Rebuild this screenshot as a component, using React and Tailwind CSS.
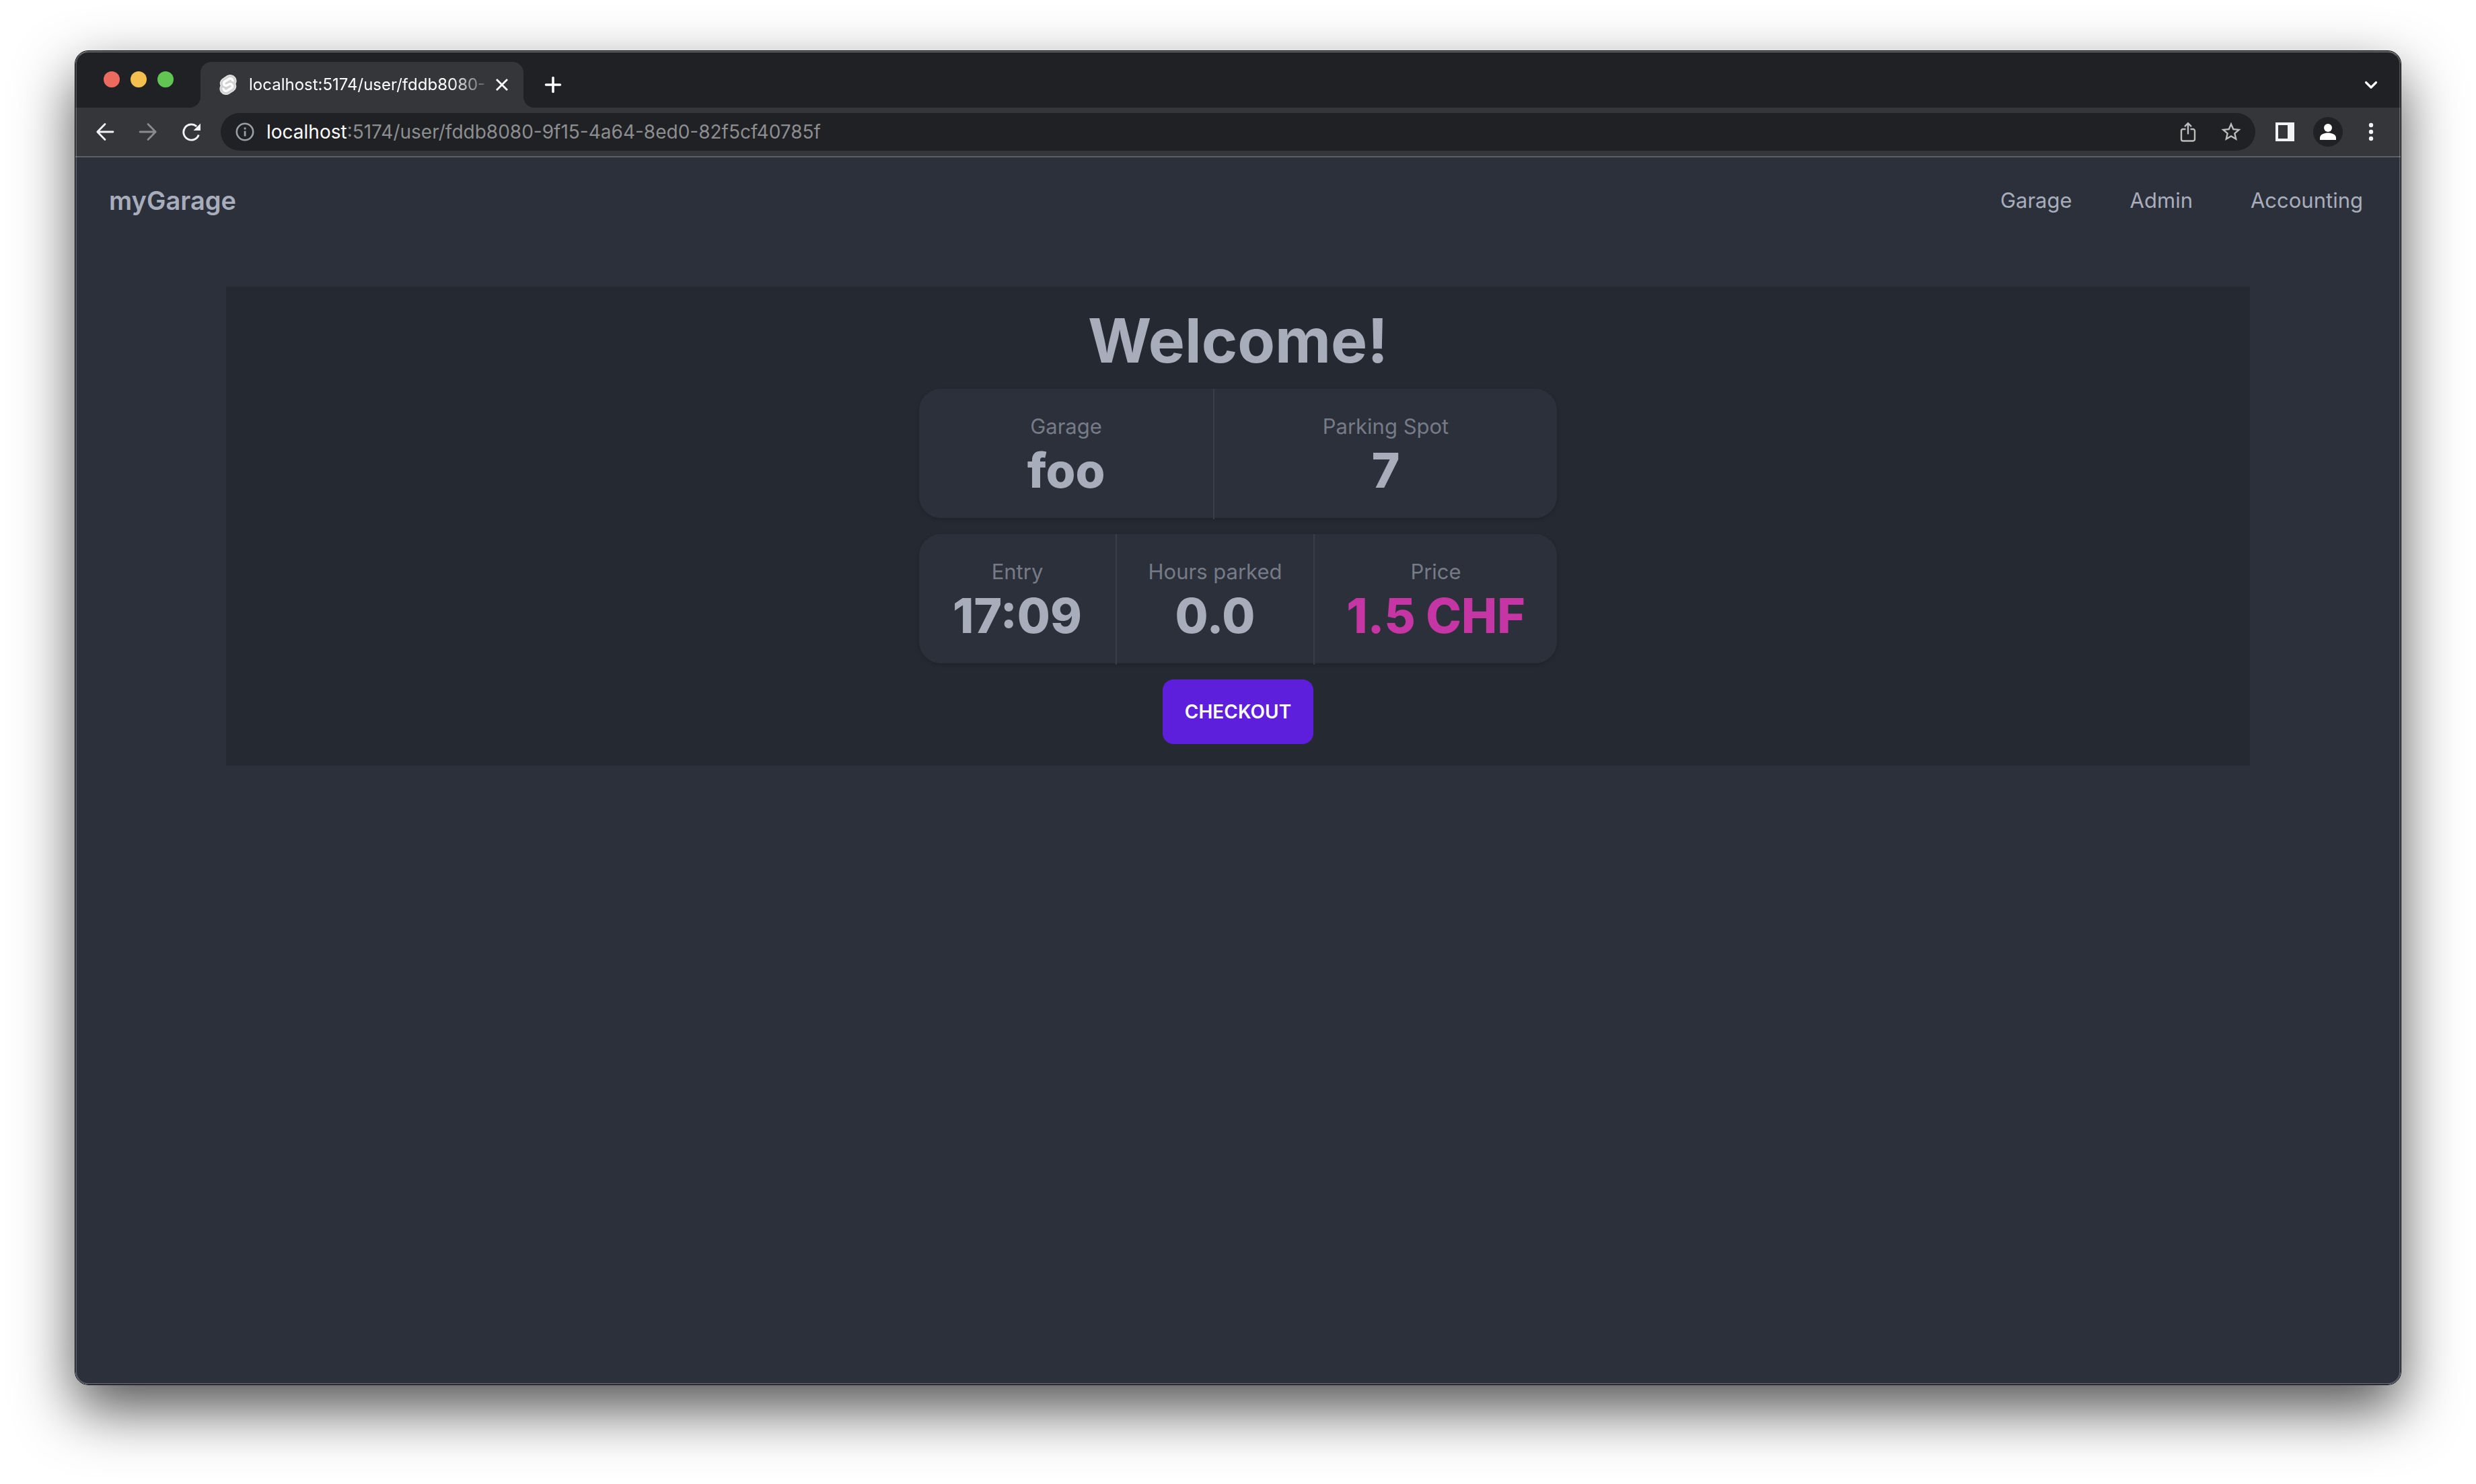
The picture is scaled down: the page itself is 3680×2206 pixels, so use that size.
function SvelteIcon() {
  return (
    <svg viewBox="-3 -3 104 124" className="h-[30px] w-[26px] shrink-0" aria-hidden="true">
      <path
        d="M91.8 15.6C80.9-.1 59.2-4.7 43.6 5.2L16.1 22.8C8.6 27.5 3.4 35.2 1.9 43.9c-1.3 7.3-.2 14.8 3.3 21.3-2.4 3.6-4 7.6-4.7 11.8-1.6 8.9.5 18.1 5.7 25.4 11 15.7 32.6 20.3 48.2 10.4l27.5-17.5c7.5-4.7 12.7-12.4 14.2-21.1 1.3-7.3.2-14.8-3.3-21.3 2.4-3.6 4-7.6 4.7-11.8 1.7-9-.4-18.2-5.7-25.5"
        fill="#d2d2d2"
        stroke="#e2e2e2"
        strokeWidth="6"
      />
      <path
        d="M40.9 103.9c-8.9 2.3-18.2-1.2-23.4-8.7-3.2-4.4-4.4-9.9-3.5-15.3.2-.9.4-1.7.6-2.6l.5-1.6 1.4 1c3.3 2.4 6.9 4.2 10.8 5.4l1 .3-.1 1c-.1 1.4.3 2.9 1.1 4.1 1.6 2.3 4.4 3.4 7.1 2.7.6-.2 1.2-.4 1.7-.7L65.5 72c1.4-.9 2.3-2.2 2.6-3.8.3-1.6-.1-3.3-1-4.6-1.6-2.3-4.4-3.3-7.1-2.6-.6.2-1.2.4-1.7.7l-10.5 6.7c-1.7 1.1-3.6 1.9-5.6 2.4-8.9 2.3-18.2-1.2-23.4-8.7-3.1-4.4-4.4-9.9-3.4-15.3.9-5.2 4.1-9.9 8.6-12.7l27.5-17.5c1.7-1.1 3.6-1.9 5.6-2.5 8.9-2.3 18.2 1.2 23.4 8.7 3.2 4.4 4.4 9.9 3.5 15.3-.2.9-.4 1.7-.7 2.6l-.5 1.6-1.4-1c-3.3-2.4-6.9-4.2-10.8-5.4l-1-.3.1-1c.1-1.4-.3-2.9-1.1-4.1-1.6-2.3-4.4-3.3-7.1-2.6-.6.2-1.2.4-1.7.7L32.400 46.100c-1.4.9-2.3 2.2-2.6 3.8s.1 3.300 1 4.600c1.6 2.3 4.4 3.3 7.1 2.6.6-.2 1.2-.4 1.7-.7l10.5-6.7c1.7-1.1 3.6-1.9 5.6-2.5 8.9-2.3 18.2 1.2 23.4 8.7 3.2 4.4 4.4 9.9 3.5 15.3-.9 5.2-4.1 9.9-8.6 12.7l-27.5 17.5c-1.7 1.1-3.6 1.9-5.6 2.5"
        fill="#fff"
      />
    </svg>
  );
}

function StrokeIcon({ d, className = "size-7", width = 3, box = "0 0 28 28", cap = "round", join = "round" }) {
  return (
    <svg viewBox={box} className={className} fill="none" stroke="currentColor" strokeWidth={width} strokeLinecap={cap} strokeLinejoin={join} aria-hidden="true">
      <path d={d} />
    </svg>
  );
}

function TabStrip() {
  return (
    <div className="flex h-[84px] items-end justify-between bg-[#202124] pr-[30px] pl-[42px]">
      <div className="flex h-full items-end">
        <div className="mr-6 flex gap-4 self-center">
          <button aria-label="Close window" className="size-6 rounded-full bg-[#ec6a5e]" />
          <button aria-label="Minimize window" className="size-6 rounded-full bg-[#f4bf4f]" />
          <button aria-label="Zoom window" className="size-6 rounded-full bg-[#61c554]" />
        </div>
        <svg viewBox="0 0 16 16" className="size-4" aria-hidden="true">
          <path d="M16 0v16H0A16 16 0 0 0 16 0Z" fill="#35363a" />
        </svg>
        <div className="flex h-[68px] w-[480px] items-center rounded-t-2xl bg-[#35363a] pr-5 pl-7">
          <SvelteIcon />
          <span className="ml-[18px] flex-1 overflow-hidden text-2xl whitespace-nowrap text-white [mask-image:linear-gradient(to_right,#000_300px,transparent_365px)]">
            localhost:5174/user/fddb8080-
          </span>
          <button aria-label="Close tab" className="text-white">
            <StrokeIcon d="M4 4l16 16M20 4L4 20" width={2.8} className="size-6" box="0 0 24 24" cap="butt" />
          </button>
        </div>
        <svg viewBox="0 0 16 16" className="size-4" aria-hidden="true">
          <path d="M0 0v16h16A16 16 0 0 1 0 0Z" fill="#35363a" />
        </svg>
        <button aria-label="New tab" className="ml-[14px] flex h-[68px] items-center text-white">
          <StrokeIcon d="M14 3.500v21M3.500 14h21" width={3.6} />
        </button>
      </div>
      <button aria-label="Search tabs" className="flex h-[68px] items-center text-white">
        <StrokeIcon d="M6.500 10.500l7.500 7.500l7.500-7.500" width={3.2} />
      </button>
    </div>
  );
}

function Toolbar() {
  return (
    <div className="flex items-center border-b-2 border-[#5d5f63] bg-[#35363a] px-[30px] py-2 text-[#f1f3f4]">
      <div className="mr-[30px] flex gap-9">
        <button aria-label="Back">
          <StrokeIcon d="M26 14H3M14 2.500L2.800 14L14 25.500" width={2.8} />
        </button>
        <button aria-label="Forward" className="text-[#8a8b8d]">
          <StrokeIcon d="M2 14h23M14 2.500L25.200 14L14 25.500" width={2.8} />
        </button>
        <button aria-label="Reload">
          <svg viewBox="0 0 28 28" className="size-7" aria-hidden="true">
            <path d="M25.300 18.500A11.600 11.600 0 1 1 22.200 5.900" fill="none" stroke="currentColor" strokeWidth="2.900" />
            <path d="M28 1.500v10.500H17.500Z" fill="currentColor" />
          </svg>
        </button>
      </div>
      <div className="flex h-14 min-w-0 flex-1 items-center rounded-full bg-[#202124] pr-5 pl-[22px]">
        <button aria-label="View site information" className="text-[#9aa0a6]">
          <svg viewBox="0 0 28 28" className="size-7" aria-hidden="true">
            <circle cx="14" cy="14" r="12.200" fill="none" stroke="currentColor" strokeWidth="2.600" />
            <path d="M12.700 12.800h2.800v7.700h-2.800ZM12.700 7.600h2.800v2.800h-2.800Z" fill="currentColor" />
          </svg>
        </button>
        <label htmlFor="address" className="ml-[18px] text-[28px] text-white">
          localhost
        </label>
        <input
          id="address"
          type="text"
          defaultValue=":5174/user/fddb8080-9f15-4a64-8ed0-82f5cf40785f"
          className="min-w-0 flex-1 bg-transparent text-[28px] text-[#8d8e90] outline-none"
        />
        <div className="flex gap-8 text-[#bdbdbd]">
          <button aria-label="Share">
            <StrokeIcon
              d="M12.500 12H8.500a2.500 2.500 0 0 0-2.500 2.500V27a2.500 2.500 0 0 0 2.500 2.500h15a2.500 2.500 0 0 0 2.500-2.500V14.500a2.500 2.500 0 0 0-2.500-2.500H19.500M16 19.500V3.500M11 8.200l5-5l5 5"
              box="0 0 32 32"
              className="size-8"
              width={2.4}
              cap="butt"
              join="miter"
            />
          </button>
          <button aria-label="Bookmark this page">
            <svg viewBox="1 1 22 22" className="size-8" fill="currentColor" aria-hidden="true">
              <path d="M22 9.240l-7.190-.62L12 2 9.190 8.630 2 9.240l5.460 4.730L5.820 21 12 17.270 18.180 21l-1.630-7.030L22 9.240zM12 15.400l-3.760 2.270 1-4.280-3.320-2.880 4.380-.38L12 6.100l1.710 4.040 4.380.38-3.320 2.880 1 4.280L12 15.400z" />
            </svg>
          </button>
        </div>
      </div>
      <div className="ml-[30px] flex items-center gap-7">
        <button aria-label="Side panel">
          <svg viewBox="0 0 28 28" className="size-7" fill="currentColor" fillRule="evenodd" aria-hidden="true">
            <path d="M0 0h28v28H0ZM4 4v20h14V4Z" />
          </svg>
        </button>
        <button aria-label="Profile" className="flex size-11 items-center justify-center rounded-full bg-[#202124] text-white">
          <svg viewBox="0 0 24 24" className="size-6" fill="currentColor" aria-hidden="true">
            <circle cx="12" cy="6" r="6" />
            <path d="M0 24v-3.500C0 16 7 13.500 12 13.500s12 2.500 12 7V24Z" />
          </svg>
        </button>
        <button aria-label="Menu">
          <svg viewBox="0 0 28 28" className="size-7" fill="currentColor" aria-hidden="true">
            <circle cx="14" cy="4" r="3.200" />
            <circle cx="14" cy="14" r="3.200" />
            <circle cx="14" cy="24" r="3.200" />
          </svg>
        </button>
      </div>
    </div>
  );
}

function Stat({ title, value, valueClass = "text-[#a8adbb]" }) {
  return (
    <div className="flex flex-col items-center py-8 whitespace-nowrap">
      <dt className="text-[31px] leading-[48px] text-[#767b87]">{title}</dt>
      <dd className={`text-[71px] leading-[82px] font-extrabold ${valueClass}`}>{value}</dd>
    </div>
  );
}

const statsBase =
  "grid h-48 w-[948px] divide-x-2 divide-[#393d48] rounded-[32px] bg-[#2c303b] shadow-[0_2px_6px_rgba(0,0,0,0.1),0_2px_4px_rgba(0,0,0,0.06)]";

function Page() {
  return (
    <div className="flex-1 bg-[#2c303b] text-[#a8adbb]">
      <header className="flex h-32 items-center justify-between pr-14 pl-[50px]">
        <a href="#home" className="text-[38px] font-semibold">
          myGarage
        </a>
        <nav className="flex gap-[86px] text-[31px]">
          <a href="#garage">Garage</a>
          <a href="#admin">Admin</a>
          <a href="#accounting">Accounting</a>
        </nav>
      </header>
      <main className="mx-56 mt-16 flex flex-col items-center gap-6 bg-[#252932] py-8">
        <h1 className="text-[91px] leading-[96px] font-bold">Welcome!</h1>
        <dl className={`${statsBase} grid-cols-[439fr_509fr]`}>
          <Stat title="Garage" value="foo" />
          <Stat title="Parking Spot" value="7" />
        </dl>
        <dl className={`${statsBase} grid-cols-[294fr_294fr_360fr]`}>
          <Stat title="Entry" value="17:09" />
          <Stat title="Hours parked" value="0.0" />
          <Stat title="Price" value="1.5 CHF" valueClass="text-[#c535a3]" />
        </dl>
        <button className="h-24 w-56 rounded-2xl bg-[#5d1fdb] text-[28px] font-semibold text-white uppercase">
          Checkout
        </button>
      </main>
    </div>
  );
}

export default function App() {
  return (
    <div className="flex min-h-screen bg-white px-[111px] pt-[75px] pb-[147px] font-['Inter',sans-serif]">
      <div className="relative flex min-w-0 flex-1 flex-col overflow-hidden rounded-[20px] border border-black shadow-[0_36px_86px_rgba(0,0,0,0.68)]">
        <TabStrip />
        <Toolbar />
        <Page />
        <div className="pointer-events-none absolute inset-0 rounded-[19px] border-2 border-white/20 border-t-white/30" />
      </div>
    </div>
  );
}
